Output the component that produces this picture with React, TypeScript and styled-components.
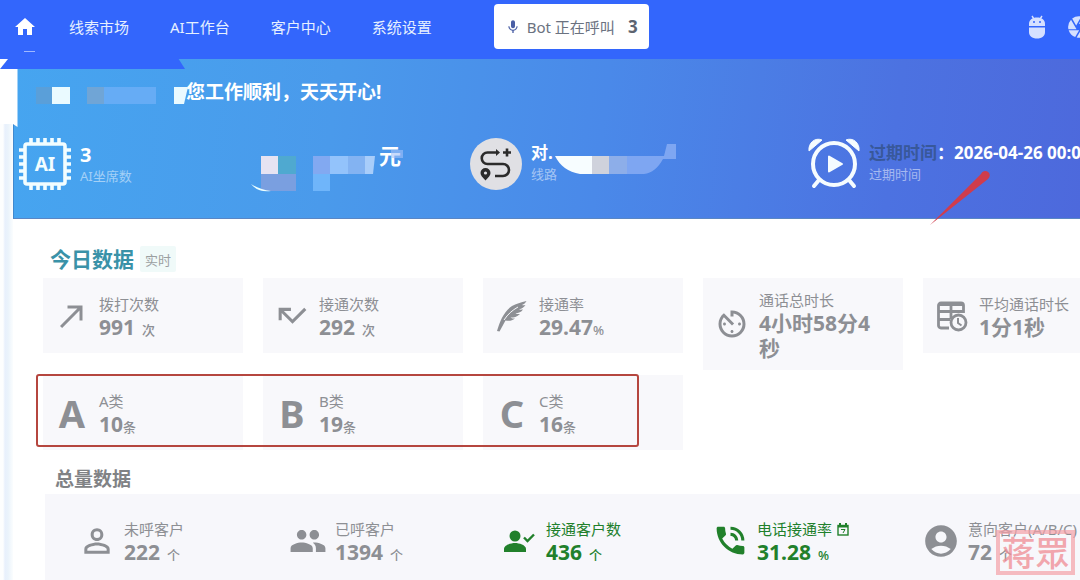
import React from "react";
import styled, { createGlobalStyle } from "styled-components";
import {
  MdHome, MdMic, MdCamera, MdCallMade, MdCallMissed, MdAvTimer, MdPermIdentity,
  MdPeople, MdPhoneInTalk, MdAccountCircle,
} from "react-icons/md";

const Global = createGlobalStyle`
  * { box-sizing: border-box; }
  body {
    margin: 0;
    background: #fff;
    font-family: "Noto Sans", "Noto Sans CJK SC", sans-serif;
    color: #8d8f94;
    overflow: hidden;
  }
  h1, h2, p { margin: 0; padding: 0; }
`;

const Page = styled.div`
  position: relative;
  min-height: 100vh;
  overflow: hidden;
`;

const TopBar = styled.header`
  display: flex;
  align-items: center;
  height: 59px;
  padding: 0 0 6px 13px;
  background: #3366fc;
  overflow: hidden;
`;

const HomeLink = styled.a`
  display: flex;
  color: #fff;
  margin-right: 32px;
`;

const Nav = styled.nav`
  display: flex;
  gap: 41px;
  flex: none;
`;

const NavLink = styled.a`
  color: #e6f0ff;
  font-size: 15px;
  line-height: 20px;
  text-decoration: none;
  white-space: nowrap;
`;

const CallStatus = styled.button`
  display: flex;
  align-items: center;
  flex: none;
  height: 45px;
  width: 155px;
  margin-left: 62px;
  padding: 0 11px;
  border: 0;
  border-radius: 4px;
  background: #fff;
  color: #6b7280;
  font: 15px/20px "Noto Sans", "Noto Sans CJK SC", sans-serif;
  white-space: nowrap;
  svg { color: #4a5fa5; margin-right: 6px; }
  strong { margin-left: auto; font-size: 17px; color: #5d6470; }
`;

const TopActions = styled.div`
  display: flex;
  align-items: center;
  flex: none;
  gap: 19px;
  margin-left: auto;
  margin-right: -12px;
`;

const IconButton = styled.button`
  display: flex;
  padding: 0;
  border: 0;
  background: none;
  color: #d5e0ff;
`;

const Body = styled.div`
  display: flex;
`;

const Rail = styled.div`
  flex: none;
  width: 13px;
  background: linear-gradient(90deg, #fdfefe 3px, #e8f0fc 5px, #eaf3fb 8px, #fbfdfe 13px);
`;

const Main = styled.main`
  flex: 1;
  min-width: 0;
  overflow: hidden;
`;

const Hero = styled.section`
  height: 160px;
  padding-top: 20px;
  background: linear-gradient(97deg, #46a5f0 0%, #4a9aeb 30%, #4a89e9 55%, #4c72e1 82%, #4d69dc 100%);
  border-left: 1px solid #4089cf;
  border-bottom: 1px solid #5a86c4;
  color: #fff;
`;

const Greeting = styled.h1`
  padding-left: 172px;
  font-size: 19px;
  line-height: 26px;
  white-space: nowrap;
`;

const HeroStats = styled.div`
  display: grid;
  grid-template-columns: minmax(225px, 2fr) minmax(226px, 2fr) minmax(338px, 3fr) minmax(338px, 3fr);
  padding: 32px 0 0 4px;
`;

const HeroStat = styled.div`
  display: flex;
  gap: 8px;
  svg { flex: none; }
`;

const HeroText = styled.div<{ $low?: boolean }>`
  padding-top: ${(p) => (p.$low ? 7 : 5)}px;
  white-space: nowrap;
`;

const HeroValue = styled.p<{ $size?: number }>`
  font-size: ${(p) => p.$size ?? 17}px;
  line-height: 22px;
  font-weight: 700;
`;

const HeroDim = styled.span`
  color: #38589a;
`;

const HeroLabel = styled.p`
  font-size: 13px;
  line-height: 20px;
  color: rgba(255, 255, 255, 0.5);
`;

const Currency = styled.p`
  padding: 7px 0 0 136px;
  font-size: 22px;
  line-height: 22px;
  font-weight: 700;
`;

const Overlay = styled.svg`
  position: absolute;
  left: 0;
  top: 0;
  pointer-events: none;
`;

const SectionHead = styled.div<{ $total?: boolean }>`
  display: flex;
  align-items: flex-end;
  gap: 6px;
  padding: ${(p) => (p.$total ? "16px 0 2px 42px" : "27px 0 6px 37px")};
`;

const SectionTitle = styled.h2<{ $total?: boolean }>`
  font-size: ${(p) => (p.$total ? 19 : 21)}px;
  line-height: 26px;
  color: ${(p) => (p.$total ? "#808285" : "#3a92a8")};
`;

const Badge = styled.span`
  padding: 2px 5px 0;
  font-size: 13px;
  line-height: 24px;
  color: #9b9fa1;
  background: #f0faf9;
  border-radius: 2px;
`;

const TodayArea = styled.div`
  position: relative;
`;

const CardGrid = styled.div`
  display: grid;
  grid-template-columns: repeat(5, minmax(200px, 1fr));
  align-items: start;
  gap: 5px 20px;
  padding-left: 30px;
`;

const Card = styled.article`
  display: flex;
  align-items: center;
  gap: 11px;
  min-height: 75px;
  padding: 9px 20px 9px 13px;
  background: #f8f8fb;
`;

const IconBox = styled.div`
  display: flex;
  justify-content: center;
  flex: none;
  width: 32px;
  font-size: 38px;
  line-height: 40px;
  font-weight: 700;
  svg { flex: none; }
`;

const StatBody = styled.div`
  padding-top: 3px;
`;

const Label = styled.p`
  font-size: 15px;
  line-height: 21px;
  white-space: nowrap;
`;

const Value = styled.p`
  font-size: 21px;
  line-height: 25px;
  font-weight: 700;
`;

const Unit = styled.small<{ $spaced?: boolean }>`
  margin-left: ${(p) => (p.$spaced ? 7 : 0)}px;
  font-size: 13px;
  line-height: 20px;
  font-weight: 500;
`;

const Highlight = styled.div`
  position: absolute;
  left: 23px;
  top: 96px;
  width: 603px;
  height: 73px;
  border: 2px solid #b5463f;
  border-radius: 3px;
`;

const TotalPanel = styled.section`
  display: grid;
  grid-template-columns: repeat(5, minmax(211px, 1fr));
  margin-left: 32px;
  padding: 22px 0 40px;
  background: #f7f7fb;
`;

const TotalItem = styled.article<{ $good?: boolean }>`
  display: flex;
  align-items: center;
  gap: 11px;
  padding-left: 36px;
  color: ${(p) => (p.$good ? "#21802b" : "#8d8f94")};
`;

const Seal = styled.div`
  position: absolute;
  right: 5px;
  top: 530px;
  width: 79px;
  height: 45px;
  border: 4px solid rgba(244, 160, 166, 0.7);
  color: rgba(240, 140, 148, 0.75);
  font: 500 34px/35px "Noto Sans CJK SC", sans-serif;
  text-align: center;
  white-space: nowrap;
`;

const Android = () => (
  <svg width="20" height="24" viewBox="0 0 20 24" fill="currentColor">
    <path d="M5 1 L7 4 M15 1 L13 4" stroke="currentColor" strokeWidth="1.4" />
    <path d="M2 11V9c0-4 3-6.500 8-6.500S18 5 18 9v2z" />
    <path d="M2 12.500h16V17c0 4-3 6.500-8 6.500S2 21 2 17z" />
    <circle cx="7" cy="7" r="1" fill="#3366fc" />
    <circle cx="13" cy="7" r="1" fill="#3366fc" />
  </svg>
);

const Chip = () => {
  const pins = [13, 20, 27, 34, 41];
  return (
    <svg width="54" height="54" viewBox="0 0 54 54" stroke="#f2fdff" strokeWidth="3.600" fill="none">
      <rect x="7" y="7" width="40" height="40" rx="2" />
      {pins.map((p) => (
        <path key={p} d={`M${p} 1v6M${p} 47v6M1 ${p}h6M47 ${p}h6`} />
      ))}
      <text x="27" y="34" textAnchor="middle" fill="#f2fdff" stroke="none" fontSize="19" fontWeight="700">AI</text>
    </svg>
  );
};

const Route = () => (
  <svg width="54" height="54" viewBox="0 0 54 54" fill="none" stroke="#2b2b2b" strokeWidth="2.600">
    <circle cx="27" cy="27" r="26" fill="#e0e0e4" stroke="none" />
    <path d="M29 15.500H18.500a5.700 5.700 0 0 0 0 11.500H34a6 6 0 0 1 0 12H26" />
    <path d="M27 12l4 3.500-4 3.500z" fill="#2b2b2b" stroke="none" />
    <path d="M38 11.500v8M34 15.500h8" />
    <path d="M16.500 43.500c-3-3.500-5-5-5-7.500a5 5 0 0 1 10 0c0 2.500-2 4-5 7.500z" fill="#2b2b2b" stroke="none" />
    <circle cx="16.500" cy="36" r="1.600" fill="#e0e0e4" stroke="none" />
  </svg>
);

const Alarm = () => (
  <svg width="54" height="54" viewBox="0 0 54 54" fill="none" stroke="#f5fcff" strokeWidth="4">
    <circle cx="27" cy="27" r="21" />
    <path d="M12 43l-5 6M42 43l5 6" strokeLinecap="round" />
    <path d="M2 14C1 6 8 0 15 3zM52 14C53 6 46 0 39 3z" fill="#f5fcff" strokeWidth="1" />
    <path d="M22 19.500v15l13-7.500z" fill="#f5fcff" strokeWidth="2" strokeLinejoin="round" />
  </svg>
);

const Quill = () => (
  <svg width="32" height="34" viewBox="0 0 32 34" fill="currentColor">
    <path d="M1 32C4 22 8 12 16 7c4-2.500 9-3.500 14.500-5-1 2-2.500 3-4.500 4 1 .3 2 .2 3.500 0-1.500 2.500-3.500 3.500-6.500 4.300 1 .5 2.300.4 4 .2-1.700 2.700-4.500 3.500-7.500 4 1 .7 2.500.7 4.500.5-3 3-6 3.500-9.500 3.500 1 1 2.500 1 4.500 1-3 2.500-6 2.500-9.500 2L3.500 32.500z" />
    <path d="M8 21C12 15 16 11.500 22 8" stroke="#f8f8fb" strokeWidth="1" fill="none" />
  </svg>
);

const TableClock = () => (
  <svg width="32" height="32" viewBox="0 0 32 32" fill="none" stroke="currentColor" strokeWidth="2.800">
    <path d="M13 28H5a2.500 2.500 0 0 1-2.500-2.500v-20A2.500 2.500 0 0 1 5 3h20a2.500 2.500 0 0 1 2.500 2.500V13M2 11.500h25.500M2 19.500h12M15 4v15" />
    <path d="M3 4h24v2H3z" fill="currentColor" stroke="none" />
    <circle cx="22.500" cy="22.500" r="7.500" fill="#f8f8fb" />
    <path d="M22 18v5l3.500 2.500" strokeWidth="2" />
  </svg>
);

const PersonCheck = () => (
  <svg width="32" height="26" viewBox="0 0 32 26" fill="currentColor">
    <circle cx="12" cy="8" r="5.500" />
    <path d="M1 24v-3c0-4 7-6 11-6s11 2 11 6v3z" />
    <path d="M21 9.500l3.500 3.500 6.500-6.500" fill="none" stroke="currentColor" strokeWidth="2.400" />
  </svg>
);

const Calendar = () => (
  <svg width="12" height="13" viewBox="0 0 12 13" fill="none" stroke="currentColor">
    <rect x="1" y="2.500" width="10" height="9.500" strokeWidth="1.400" />
    <path d="M1 3.500h10M3 0v3M9 0v3" strokeWidth="2" />
    <path d="M4 6.500h4L6 10" strokeWidth="1" />
  </svg>
);

const RateLabel = styled.span`
  display: inline-flex;
  align-items: center;
  gap: 5px;
`;

type Stat = {
  icon: React.ReactNode;
  label: React.ReactNode;
  value: string;
  unit?: string;
  spaced?: boolean;
  good?: boolean;
};

const today: Stat[] = [
  { icon: <MdCallMade size={36} />, label: "拨打次数", value: "991", unit: "次", spaced: true },
  { icon: <MdCallMissed size={37} />, label: "接通次数", value: "292", unit: "次", spaced: true },
  { icon: <Quill />, label: "接通率", value: "29.47", unit: "%" },
  { icon: <MdAvTimer size={36} />, label: "通话总时长", value: "4小时58分4秒" },
  { icon: <TableClock />, label: "平均通话时长", value: "1分1秒" },
  { icon: "A", label: "A类", value: "10", unit: "条" },
  { icon: "B", label: "B类", value: "19", unit: "条" },
  { icon: "C", label: "C类", value: "16", unit: "条" },
];

const totals: Stat[] = [
  { icon: <MdPermIdentity size={38} />, label: "未呼客户", value: "222", unit: "个", spaced: true },
  { icon: <MdPeople size={38} />, label: "已呼客户", value: "1394", unit: "个", spaced: true },
  { icon: <PersonCheck />, label: "接通客户数", value: "436", unit: "个", spaced: true, good: true },
  { icon: <MdPhoneInTalk size={37} />, label: <RateLabel>电话接通率<Calendar /></RateLabel>, value: "31.28", unit: "%", spaced: true, good: true },
  { icon: <MdAccountCircle size={38} />, label: "意向客户(A/B/C)", value: "72", unit: "个", spaced: true },
];

const StatText = ({ s }: { s: Stat }) => (
  <StatBody>
    <Label>{s.label}</Label>
    <Value>{s.value}{s.unit && <Unit $spaced={s.spaced}>{s.unit}</Unit>}</Value>
  </StatBody>
);

export default function App() {
  return (
    <Page>
      <Global />
      <TopBar>
        <HomeLink href="#" aria-label="首页"><MdHome size={24} /></HomeLink>
        <Nav>
          <NavLink href="#">线索市场</NavLink>
          <NavLink href="#">AI工作台</NavLink>
          <NavLink href="#">客户中心</NavLink>
          <NavLink href="#">系统设置</NavLink>
        </Nav>
        <CallStatus><MdMic size={16} />Bot 正在呼叫<strong>3</strong></CallStatus>
        <TopActions>
          <IconButton aria-label="安卓"><Android /></IconButton>
          <IconButton aria-label="浏览器"><MdCamera size={26} /></IconButton>
        </TopActions>
      </TopBar>
      <Body>
        <Rail />
        <Main>
          <Hero>
            <Greeting>您工作顺利，天天开心!</Greeting>
            <HeroStats>
              <HeroStat>
                <Chip />
                <HeroText $low>
                  <HeroValue $size={20}>3</HeroValue>
                  <HeroLabel>AI坐席数</HeroLabel>
                </HeroText>
              </HeroStat>
              <Currency>元</Currency>
              <HeroStat>
                <Route />
                <HeroText>
                  <HeroValue>对.</HeroValue>
                  <HeroLabel>线路</HeroLabel>
                </HeroText>
              </HeroStat>
              <HeroStat>
                <Alarm />
                <HeroText>
                  <HeroValue><HeroDim>过期时间</HeroDim>：2026-04-26 00:00:00</HeroValue>
                  <HeroLabel>过期时间</HeroLabel>
                </HeroText>
              </HeroStat>
            </HeroStats>
          </Hero>
          <SectionHead>
            <SectionTitle>今日数据</SectionTitle>
            <Badge>实时</Badge>
          </SectionHead>
          <TodayArea>
            <CardGrid>
              {today.map((s) => (
                <Card key={s.value}><IconBox>{s.icon}</IconBox><StatText s={s} /></Card>
              ))}
            </CardGrid>
            <Highlight />
          </TodayArea>
          <SectionHead $total>
            <SectionTitle $total>总量数据</SectionTitle>
          </SectionHead>
          <TotalPanel>
            {totals.map((s) => (
              <TotalItem key={s.value} $good={s.good}>
                <IconBox>{s.icon}</IconBox><StatText s={s} />
              </TotalItem>
            ))}
          </TotalPanel>
        </Main>
      </Body>
      <Overlay width="1080" height="240" viewBox="0 0 1080 240">
        <path d="M0 58H178L185 69H0z" fill="#3366fc" />
        <path d="M0 59H8L0 69z" fill="#fff" />
        <path d="M0 69H17.500V127L13 124H0z" fill="#fff" />
        <path d="M24 51.500h11" stroke="#9fb8ff" />
        <rect x="36" y="87" width="16" height="17" fill="#5a9fd9" />
        <rect x="52" y="87" width="18" height="17" fill="#eafaff" />
        <rect x="87" y="87" width="17" height="17" fill="#70a5d6" />
        <rect x="104" y="87" width="52" height="17" fill="#66acf5" />
        <path d="M174 87H188L184 104H174z" fill="#eafaff" />
        <rect x="261" y="156" width="17" height="18" fill="#e6e3f2" />
        <rect x="278" y="156" width="18" height="18" fill="#4fa9d0" />
        <rect x="261" y="174" width="35" height="17" fill="#7a9fe0" />
        <path d="M251 184C257 188 263 190 271 191C262 192 256 190 251 184z" fill="#eaffff" />
        <rect x="313" y="156" width="17" height="18" fill="#82a9f1" />
        <rect x="330" y="156" width="18" height="18" fill="#93c3fb" />
        <rect x="348" y="156" width="17" height="18" fill="#83b3f2" />
        <path d="M365 156H375L373 174H365z" fill="#a8cdfa" />
        <rect x="313" y="174" width="17" height="17" fill="#6fb5fa" />
        <rect x="391" y="150" width="12" height="8" fill="#a3c1f8" opacity=".6" />
        <path d="M555 156H592V174H580C568 172 560 166 555 156z" fill="#f7fdff" />
        <rect x="592" y="156" width="17" height="18" fill="#cfd2dc" />
        <rect x="609" y="156" width="18" height="18" fill="#8daee9" />
        <path d="M627 156H664L667 144H676V159H663C658 168 652 173 644 174H627z" fill="#7ea6f2" />
        <path d="M930 225L981 174A4.500 4.500 0 1 1 988 179z" fill="#d03c4c" />
      </Overlay>
      <Seal>蒋眾</Seal>
    </Page>
  );
}
